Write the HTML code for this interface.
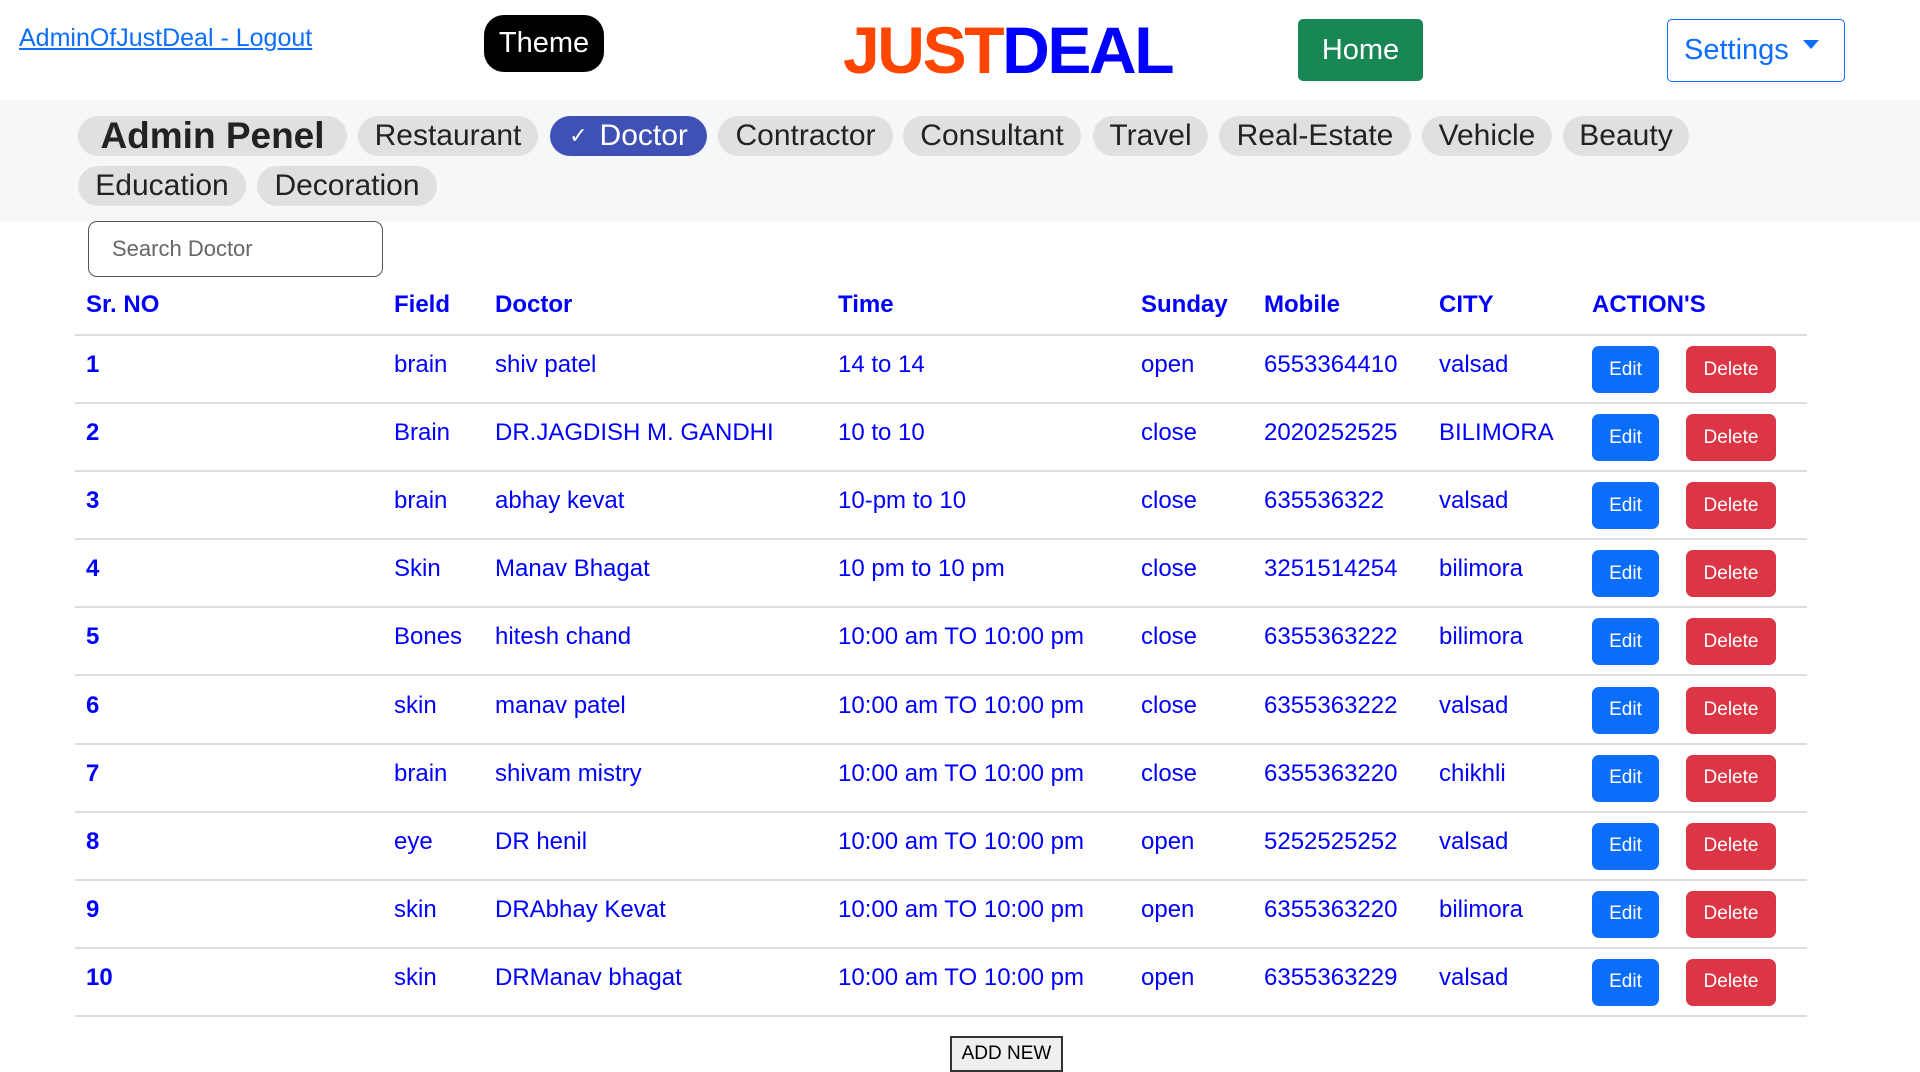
<!DOCTYPE html>
<html><head><meta charset="utf-8"><style>
*{box-sizing:border-box;margin:0;padding:0}
body{width:1920px;height:1072px;overflow:hidden;background:#fff;font-family:"Liberation Sans",Arial,sans-serif;position:relative}
.a{position:absolute}
.logout{left:19px;top:24px;font-size:25px;color:#0d6efd;text-decoration:underline}
.theme{left:484px;top:15px;width:120px;height:57px;background:#000;color:#fff;border-radius:20px;font-size:29px;display:flex;align-items:center;justify-content:center}
.logo{left:843px;top:12px;font-size:66px;font-weight:bold;letter-spacing:-2.4px;line-height:76px}
.home{left:1298px;top:19px;width:125px;height:62px;background:#198754;color:#fff;border-radius:5px;font-size:29px;display:flex;align-items:center;justify-content:center}
.set{left:1667px;top:19px;width:178px;height:63px;border:1.5px solid #0d6efd;color:#0d6efd;border-radius:5px;font-size:29px;display:flex;align-items:center;padding-left:16px}
.set span{display:inline-block;margin-left:14px;border-left:8px solid transparent;border-right:8px solid transparent;border-top:9px solid #0d6efd;position:relative;top:-6px}
.band{left:0;top:100px;width:1920px;height:121px;background:#f6f7f9}
.chip{position:absolute;height:40px;border-radius:20px;background:#e0e0e0;color:#222;font-size:30px;display:flex;align-items:center;justify-content:center}
.search{left:88px;top:221px;width:295px;height:56px;border:1px solid #555;border-radius:9px;font-size:22px;color:#666;padding:14px 0 0 23px}
.t{position:absolute;font-size:24px;color:#0000ff;white-space:nowrap}
.h{font-weight:bold}
.line{position:absolute;left:75px;width:1732px;height:2px;background:#dedede}
.edit,.del{position:absolute;height:47px;border-radius:7px;color:#fff;font-size:19px;display:flex;align-items:center;justify-content:center}
.edit{width:67px;background:#0d6efd;left:1592px}
.del{width:90px;background:#dc3545;left:1686px}
.add{left:950px;top:1036px;width:113px;height:36px;border:2px solid #333;background:#efefef;font-size:19px;display:flex;align-items:center;justify-content:center;color:#000}
</style></head><body>
<div class="a logout">AdminOfJustDeal - Logout</div>
<div class="a theme">Theme</div>
<div class="a logo"><span style="color:#ff4500">JUST</span><span style="color:#0000ff">DEAL</span></div>
<div class="a home">Home</div>
<div class="a set">Settings<span></span></div>
<div class="a band"></div>
<div class="chip" style="left:78px;top:116px;width:269px;font-weight:bold;font-size:37px">Admin Penel</div>
<div class="chip" style="left:358px;top:116px;width:180px">Restaurant</div>
<div class="chip" style="left:550px;top:116px;width:157px;background:#3f51b5;color:#fff"><span style="font-size:22px;margin-right:12px">✓</span>Doctor</div>
<div class="chip" style="left:718px;top:116px;width:175px">Contractor</div>
<div class="chip" style="left:903px;top:116px;width:178px">Consultant</div>
<div class="chip" style="left:1093px;top:116px;width:115px">Travel</div>
<div class="chip" style="left:1219px;top:116px;width:192px">Real-Estate</div>
<div class="chip" style="left:1422px;top:116px;width:130px">Vehicle</div>
<div class="chip" style="left:1563px;top:116px;width:126px">Beauty</div>
<div class="chip" style="left:78px;top:166px;width:168px">Education</div>
<div class="chip" style="left:257px;top:166px;width:180px">Decoration</div>
<div class="a search">Search Doctor</div>

<div class="t h" style="left:86px;top:291px">Sr. NO</div>
<div class="t h" style="left:394px;top:291px">Field</div>
<div class="t h" style="left:495px;top:291px">Doctor</div>
<div class="t h" style="left:838px;top:291px">Time</div>
<div class="t h" style="left:1141px;top:291px">Sunday</div>
<div class="t h" style="left:1264px;top:291px">Mobile</div>
<div class="t h" style="left:1439px;top:291px">CITY</div>
<div class="t h" style="left:1592px;top:291px">ACTION'S</div>
<div class="line" style="top:334px"></div>

<div id="rows"></div>
<script>
var d=[["1","brain","shiv patel","14 to 14","open","6553364410","valsad"],
["2","Brain","DR.JAGDISH M. GANDHI","10 to 10","close","2020252525","BILIMORA"],
["3","brain","abhay kevat","10-pm to 10","close","635536322","valsad"],
["4","Skin","Manav Bhagat","10 pm to 10 pm","close","3251514254","bilimora"],
["5","Bones","hitesh chand","10:00 am TO 10:00 pm","close","6355363222","bilimora"],
["6","skin","manav patel","10:00 am TO 10:00 pm","close","6355363222","valsad"],
["7","brain","shivam mistry","10:00 am TO 10:00 pm","close","6355363220","chikhli"],
["8","eye","DR henil","10:00 am TO 10:00 pm","open","5252525252","valsad"],
["9","skin","DRAbhay Kevat","10:00 am TO 10:00 pm","open","6355363220","bilimora"],
["10","skin","DRManav bhagat","10:00 am TO 10:00 pm","open","6355363229","valsad"]];
var xs=[86,394,495,838,1141,1264,1439],h="";
d.forEach(function(r,i){var y=335+i*68.1;
r.forEach(function(c,j){h+='<div class="t'+(j==0?' h':'')+'" style="left:'+xs[j]+'px;top:'+(y+16)+'px">'+c+'</div>';});
h+='<div class="edit" style="top:'+(y+11)+'px">Edit</div><div class="del" style="top:'+(y+11)+'px">Delete</div>';
h+='<div class="line" style="top:'+(y+67)+'px"></div>';});
document.getElementById("rows").innerHTML=h;
</script>
<div class="a add">ADD NEW</div>
</body></html>
